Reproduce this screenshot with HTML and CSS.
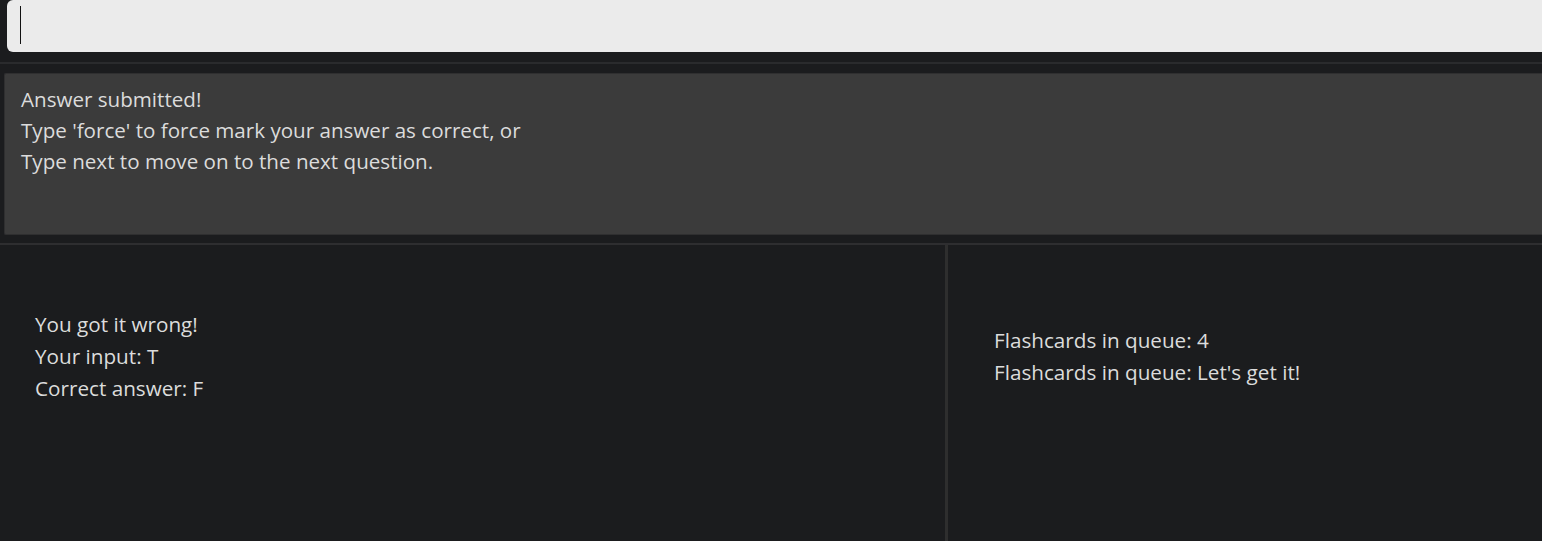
FILE: index.html
```html
<!DOCTYPE html>
<html>
<head>
<meta charset="utf-8">
<link rel="stylesheet" href="styles.css">
</head>
<body>
<div class="input-row">
  <div class="input"><span class="caret"></span></div>
</div>
<div class="rule"></div>
<div class="message-wrap">
  <div class="message">
    <div>Answer submitted!</div>
    <div>Type 'force' to force mark your answer as correct, or</div>
    <div>Type next to move on to the next question.</div>
  </div>
</div>
<div class="rule rule-low"></div>
<div class="panels">
  <div class="panel panel-left">
    <div class="panel-inner">
      <div>You got it wrong!</div>
      <div>Your input: T</div>
      <div>Correct answer: F</div>
    </div>
  </div>
  <div class="divider"></div>
  <div class="panel panel-right">
    <div class="panel-inner">
      <div>Flashcards in queue: 4</div>
      <div>Flashcards in queue: Let's get it!</div>
    </div>
  </div>
</div>
</body>
</html>
```
FILE: styles.css
```css
html, body {
  margin: 0;
  padding: 0;
  height: 100%;
  background: #1b1c1e;
  overflow: hidden;
}
body {
  font-family: "Open Sans", "Noto Sans", sans-serif;
  color: #dcdcdc;
  display: flex;
  flex-direction: column;
}
.input-row {
  padding-left: 7px;
  height: 52px;
}
.input {
  height: 52px;
  background: #ebebeb;
  border-radius: 6px 0 0 6px;
  padding: 6px 0 0 13px;
  box-sizing: border-box;
}
.caret {
  display: block;
  width: 1px;
  height: 38px;
  background: #111;
}
.rule {
  height: 2px;
  background: #2a2b2d;
  margin-top: 10px;
}
.message-wrap {
  padding: 9px 0 0 4px;
}
.message {
  height: 162px;
  box-sizing: border-box;
  background: #3b3b3b;
  border: 1px solid #2f2f30;
  border-right: none;
  border-radius: 2px 0 0 2px;
  padding: 10px 0 0 16px;
  font-size: 20.6px;
  line-height: 31px;
}
.rule-low {
  margin-top: 8px;
  background: #2e2e30;
}
.panels {
  flex: 1;
  display: flex;
  font-size: 20.7px;
  line-height: 32px;
}
.panel {
  display: flex;
}
.panel-inner {
  height: 222px;
  display: flex;
  flex-direction: column;
  justify-content: center;
}
.panel-left {
  width: 945px;
  padding-left: 35px;
  box-sizing: border-box;
}
.divider {
  width: 3px;
  background: #2e2e2e;
}
.panel-right {
  flex: 1;
  padding-left: 46px;
}
```
